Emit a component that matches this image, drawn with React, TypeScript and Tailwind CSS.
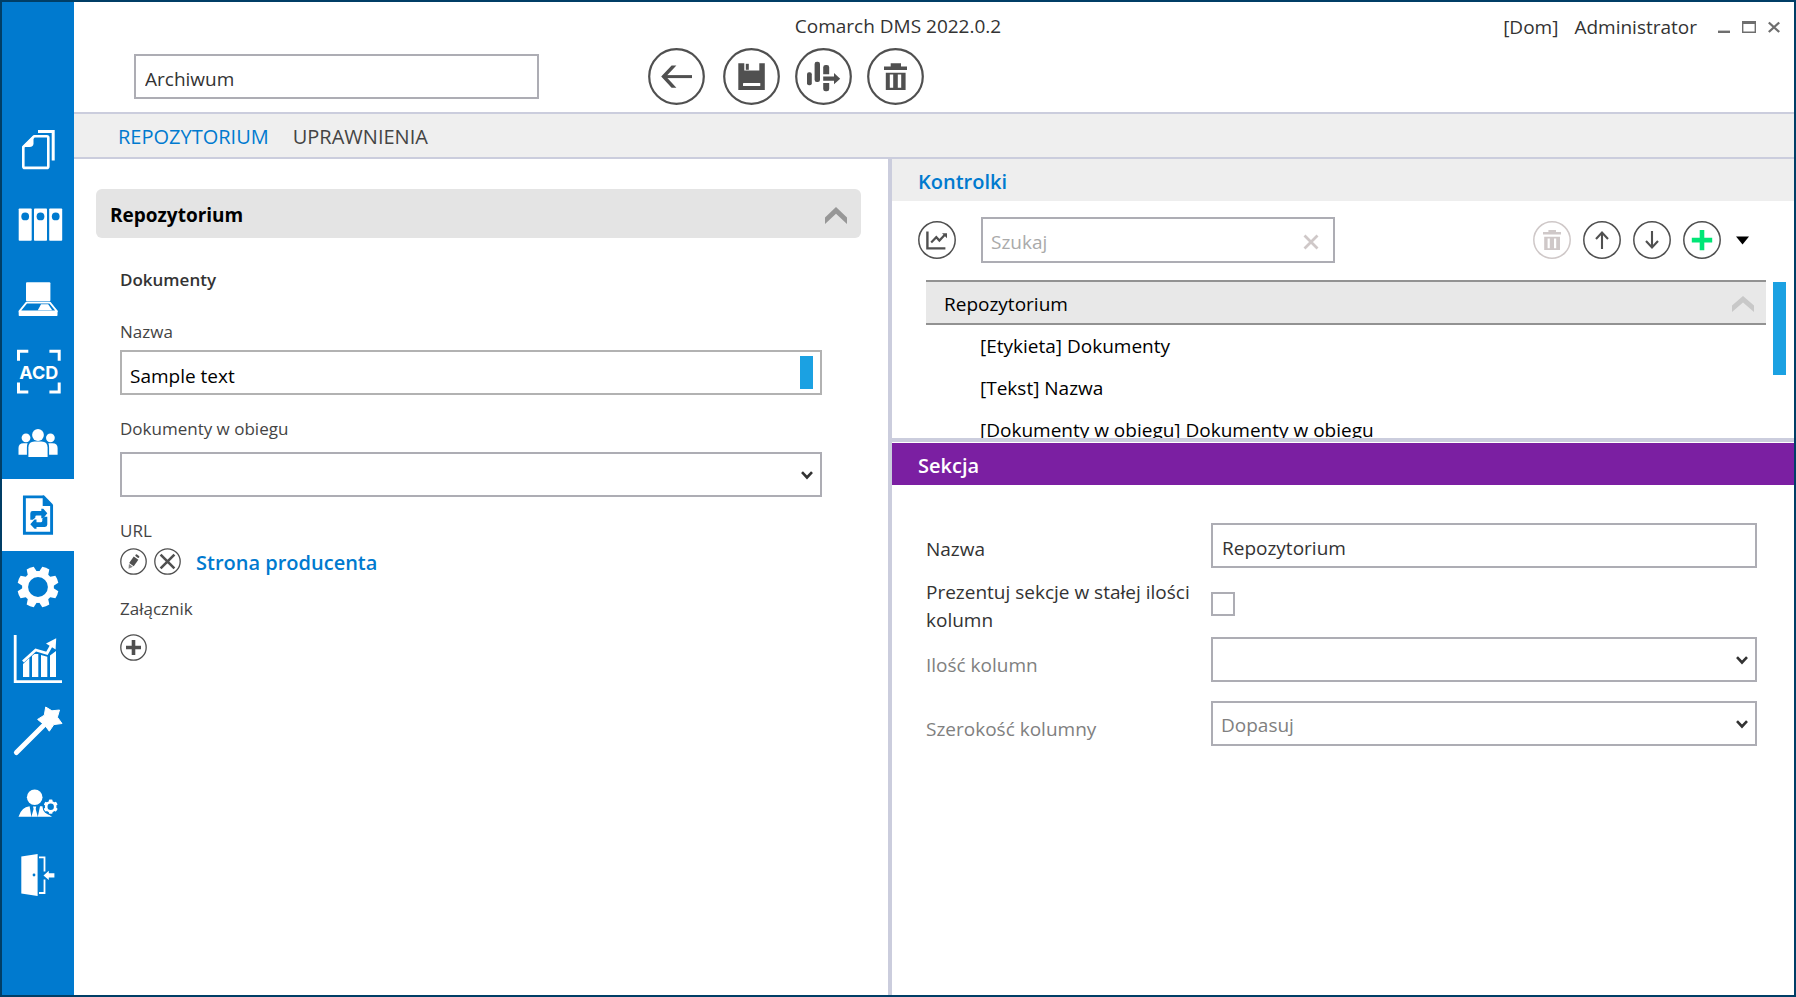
import { useState } from "react";
import type { ReactNode, SelectHTMLAttributes } from "react";

const BLUE = "#007acf";

function DocumentsIcon() {
  return (
    <>
      <path d="M32 17.3H44.8Q46.3 17.3 46.3 18.8V47.4Q46.3 48.9 44.8 48.9H22.8Q21.3 48.9 21.3 47.4V28Z" fill="none" stroke="#fff" strokeWidth="2.6" strokeLinejoin="round" />
      <path d="M20.5 28 31.5 16.5V24.2Q31.5 28 27.5 28Z" fill="#fff" />
      <path d="M36 12.6H51.2V41.5" fill="none" stroke="#fff" strokeWidth="3" />
    </>
  );
}

function BindersIcon() {
  return (
    <>
      {[16.7, 32, 47.2].map((x) => (
        <g key={x}>
          <rect x={x} y="17.5" width="13" height="32.2" rx="0.8" fill="#fff" />
          <circle cx={x + 6.5} cy="25.4" r="3.9" fill={BLUE} />
        </g>
      ))}
    </>
  );
}

function LaptopIcon() {
  return (
    <>
      <rect x="24" y="19.3" width="24.4" height="18.9" rx="1" fill="#fff" />
      <path d="M24.5 39.6H47.9L55 48.4H17.4Z" fill="none" stroke="#fff" strokeWidth="1.8" strokeLinejoin="round" />
      <path d="M39 41.2H46.2L50.2 47.2H35.8Z" fill="#fff" />
      <rect x="16.7" y="48.6" width="38.8" height="4.4" rx="0.8" fill="#fff" />
    </>
  );
}

function AcdIcon() {
  return (
    <>
      <path d="M16.5 25.8V16.2H26.3M47.4 16.2H57.2V25.8M57.2 47.5V57.1H47.4M26.3 57.1H16.5V47.5" fill="none" stroke="#fff" strokeWidth="3" />
      <text x="36.8" y="43.6" textAnchor="middle" fontFamily="Inter, sans-serif" fontWeight="700" fontSize="18" fill="#fff">ACD</text>
    </>
  );
}

function PeopleIcon() {
  return (
    <g fill="#fff">
      <circle cx="36" cy="28" r="5.9" />
      <circle cx="24" cy="30.8" r="4.4" />
      <circle cx="48.4" cy="30.8" r="4.4" />
      <path d="M26.4 50V40.5Q26.4 34.4 32.5 34.4H39.5Q45.6 34.4 45.6 40.5V50Z" />
      <path d="M16.5 47.7V41Q16.5 36.2 21.5 36.2H25.6Q24.9 38 24.9 40.5V47.7Z" />
      <path d="M55.6 47.7V41Q55.6 36.2 50.5 36.2H46.4Q47.1 38 47.1 40.5V47.7Z" />
    </g>
  );
}

function WorkflowDocIcon() {
  return (
    <>
      <path d="M42 17.9H22.4V54.2H49.6V26" fill="none" stroke={BLUE} strokeWidth="2.9" />
      <path d="M40.7 16.5H42.2L51 25.5V27H40.7Z" fill={BLUE} />
      <path d="M28.3 40.8V34.4Q28.3 32 30.7 32H39.3V29.7H41.3L45.3 34.3 41.3 39.2H39.3V36.6H34.6Q33.3 36.6 33.3 38V38.8L30.8 40.8Z" fill={BLUE} />
      <path d="M45.3 37.8V45.6Q45.3 48 42.9 48H34.5V49.8H32.5L28.3 45.2 32.5 40.6H34.5V43.2H39Q40.3 43.2 40.3 41.8V39.8L42.8 37.8Z" fill={BLUE} />
    </>
  );
}

function GearIcon() {
  return (
    <>
      <circle cx="36" cy="36" r="12.9" fill="none" stroke="#fff" strokeWidth="6" />
      {[22.5, 67.5, 112.5, 157.5, 202.5, 247.5, 292.5, 337.5].map((a) => (
        <path key={a} d="M31 22 32.2 15.6Q36 14.8 39.8 15.6L41 22Z" fill="#fff" transform={`rotate(${a} 36 36)`} />
      ))}
    </>
  );
}

function ChartIcon() {
  return (
    <>
      <path d="M13.2 12V58.6H60" fill="none" stroke="#fff" strokeWidth="2.8" />
      <path d="M21 41 27.3 35V54H21ZM30 33 32.5 31H36.3V54H30ZM39 32 45.3 33.8V54H39ZM48 32.5 54 28V54H48Z" fill="#fff" />
      <path d="M21 38.5 33.7 27 45 30.3 50.5 20.5" fill="none" stroke="#fff" strokeWidth="2.8" />
      <path d="M54.2 15.2 44 20.6 53.6 26.6Z" fill="#fff" />
    </>
  );
}

function WandIcon() {
  return (
    <>
      <path d="M14.4 57.6 43.5 28.6" stroke="#fff" strokeWidth="5" strokeLinecap="round" />
      <path d="M43.7 12 49.9 15.8 57.5 15 55.4 22.2 60 28.5 51.8 29.6 47.3 36.2 43 30.4 35.6 24.4 42.3 20.2Z" fill="#fff" stroke="#fff" strokeWidth="1" strokeLinejoin="round" />
    </>
  );
}

function UserGearIcon() {
  return (
    <>
      <circle cx="32.7" cy="30.3" r="7.8" fill="#fff" />
      <path d="M16.5 49.8Q19.5 39.8 27.6 39.2L29.4 49.8ZM35.8 49.8 38 39.2H41L44.5 46 50 49.8Z" fill="#fff" />
      <path d="M29.4 49.8 31.6 42 31 39.6H34.2L33.7 42 35.8 49.8Z" fill="#fff" />
      <circle cx="48.7" cy="39.7" r="8.2" fill={BLUE} />
      <circle cx="48.7" cy="39.7" r="4.5" fill="none" stroke="#fff" strokeWidth="2.6" />
      {[0, 60, 120, 180, 240, 300].map((a) => (
        <rect key={a} x="46.9" y="32.6" width="3.6" height="3" rx="0.8" fill="#fff" transform={`rotate(${a} 48.7 39.7)`} />
      ))}
    </>
  );
}

function ExitIcon() {
  return (
    <>
      <path d="M19.3 17.6 35.6 15V57L19.3 54.4Z" fill="#fff" />
      <circle cx="32" cy="36" r="1.4" fill={BLUE} />
      <path d="M37 18.4H42.5V32.5M42.5 40.5V54H37" fill="none" stroke="#fff" strokeWidth="1.8" />
      <path d="M41.5 36.4 46.8 31.8V34.2H52.4V38.6H46.8V41Z" fill="#fff" />
    </>
  );
}

const navItems: { label: string; icon: ReactNode; active?: boolean }[] = [
  { label: "Dokumenty", icon: <DocumentsIcon /> },
  { label: "Archiwum", icon: <BindersIcon /> },
  { label: "Stanowisko", icon: <LaptopIcon /> },
  { label: "ACD", icon: <AcdIcon /> },
  { label: "Pracownicy", icon: <PeopleIcon /> },
  { label: "Typy obiegów", icon: <WorkflowDocIcon />, active: true },
  { label: "Ustawienia", icon: <GearIcon /> },
  { label: "Raporty", icon: <ChartIcon /> },
  { label: "Kreator", icon: <WandIcon /> },
  { label: "Operator", icon: <UserGearIcon /> },
  { label: "Wyloguj", icon: <ExitIcon /> },
];

function Sidebar() {
  return (
    <nav className="w-[72px] shrink-0 bg-[#007acf] pt-[117px]">
      {navItems.map((item) => (
        <button
          key={item.label}
          type="button"
          aria-label={item.label}
          className={item.active ? "block size-[72px] bg-white" : "block size-[72px]"}
        >
          <svg viewBox="0 0 72 72" className="size-[72px]">{item.icon}</svg>
        </button>
      ))}
    </nav>
  );
}

function RoundButton({ label, children }: { label: string; children: ReactNode }) {
  return (
    <button type="button" aria-label={label} className="size-[57px] text-[#505050]">
      <svg viewBox="0 0 57 57" className="size-[57px]" fill="currentColor">
        <circle cx="28.5" cy="28.5" r="27.3" fill="none" stroke="currentColor" strokeWidth="2.2" />
        {children}
      </svg>
    </button>
  );
}

function SmallRoundButton({ label, muted, children }: { label: string; muted?: boolean; children: ReactNode }) {
  return (
    <button
      type="button"
      aria-label={label}
      disabled={muted}
      className={muted ? "size-[38px] text-[#cfc8c8]" : "size-[38px] text-[#505050]"}
    >
      <svg viewBox="0 0 38 38" className="size-[38px]" fill="currentColor">
        <circle cx="19" cy="19" r="18.2" fill="none" stroke="currentColor" strokeWidth="1.5" />
        {children}
      </svg>
    </button>
  );
}

function TinyRoundButton({ label, children }: { label: string; children: ReactNode }) {
  return (
    <button type="button" aria-label={label} className="block size-[27px] text-[#505050]">
      <svg viewBox="0 0 27 27" className="size-[27px]" fill="currentColor">
        <circle cx="13.5" cy="13.5" r="12.7" fill="none" stroke="currentColor" strokeWidth="1.3" />
        {children}
      </svg>
    </button>
  );
}

function Select({ children, ...rest }: SelectHTMLAttributes<HTMLSelectElement>) {
  return (
    <div className="relative w-full">
      <select
        {...rest}
        className="block h-[45px] w-full appearance-none border-2 border-[#adadb4] bg-white pt-[3px] pr-8 pl-2 text-[19px] text-[#333333] disabled:text-[#808080] disabled:opacity-100"
      >
        {children}
      </select>
      <svg viewBox="0 0 12 10" className="pointer-events-none absolute top-[19px] right-[9px] h-[10px] w-[12px]">
        <path d="M1 1.2 6 6.5 11 1.2" fill="none" stroke="#333" strokeWidth="2.6" />
      </svg>
    </div>
  );
}

function Header() {
  const [name, setName] = useState("Archiwum");
  return (
    <header className="h-[112px] border-b-2 border-[#cbcddd] bg-white">
      <div className="grid h-[46px] grid-cols-[1fr_auto_1fr] items-center pt-0.5 text-[19px] leading-6 text-[#333333]">
        <span />
        <h1 className="mr-[72px]">Comarch DMS 2022.0.2</h1>
        <div className="flex items-center justify-end pt-0.5 pr-[14px]">
          <span className="mr-4">[Dom]</span>
          <span className="mr-[21px]">Administrator</span>
          <div className="flex gap-[12px] text-[#6e6e6e]">
            <button type="button" aria-label="Minimalizuj">
              <svg viewBox="0 0 12 12" className="h-3 w-3"><path d="M0 10.8H12" stroke="currentColor" strokeWidth="2.4" /></svg>
            </button>
            <button type="button" aria-label="Maksymalizuj">
              <svg viewBox="0 0 14 12" className="h-3 w-[14px]"><path fillRule="evenodd" d="M0 0H14V12H0ZM1.4 3V10.6H12.6V3Z" fill="currentColor" /></svg>
            </button>
            <button type="button" aria-label="Zamknij">
              <svg viewBox="0 0 12 12" className="h-3 w-3"><path d="M.8 1.5 11.2 11M11.2 1.5 .8 11" stroke="currentColor" strokeWidth="2.3" /></svg>
            </button>
          </div>
        </div>
      </div>
      <div className="flex items-center pl-[60px]">
        <input
          aria-label="Nazwa typu"
          value={name}
          onChange={(e) => setName(e.target.value)}
          className="h-[45px] w-[405px] border-2 border-[#adadb4] bg-white px-[9px] pt-[5px] text-[19px] text-[#333333]"
        />
        <div className="ml-[109px] flex">
          <div className="mr-[18px] h-[57px]">
            <RoundButton label="Wstecz">
              <path d="M15 28.6H44" stroke="currentColor" strokeWidth="3" />
              <path d="M28.4 17.6H23.6L13.2 28.6 23.6 39.8H28.4L18 28.6Z" />
            </RoundButton>
          </div>
          <div className="flex gap-[15px]">
            <RoundButton label="Zapisz">
              <path d="M15.3 15.3H21.3V22.4H36.3V15.3H41.8V42H15.3Z" />
              <rect x="22.8" y="15.8" width="3" height="6" />
              <rect x="20" y="35" width="17.3" height="3" rx="0.6" fill="#fff" />
            </RoundButton>
            <RoundButton label="Przekaż">
              <rect x="12" y="24.2" width="4.8" height="13" rx="2" />
              <rect x="19.6" y="13.8" width="5.4" height="20.2" rx="2.2" />
              <path d="M28.2 26.2V19.4Q28.2 17 30.6 17H31.8Q34.2 17 34.2 19.4V26.2Z" />
              <path d="M28.2 34.9H34.2V40.9Q34.2 43.2 31.8 43.2H30.6Q28.2 43.2 28.2 40.9Z" />
              <path d="M28.2 28.6H39V25L45.2 30.7 39 36.2V32.7H28.2Z" />
            </RoundButton>
            <RoundButton label="Usuń">
              <path d="M23.7 15.3H34V18.6H40V21.9H17V18.6H23.7Z" />
              <path fillRule="evenodd" d="M18.8 24.8H38.6V42H18.8ZM22.8 26.6V39.8H26.2V26.6ZM30.8 26.6V39.8H34.2V26.6Z" />
            </RoundButton>
          </div>
        </div>
      </div>
    </header>
  );
}

function Tabs() {
  return (
    <div className="flex h-[45px] items-center gap-6 border-b-2 border-[#cbcddd] bg-[#efefef] pt-0.5 pl-[44px] text-[20px] leading-6">
      <button type="button" className="text-[#007acf]">REPOZYTORIUM</button>
      <button type="button" className="text-[#444444]">UPRAWNIENIA</button>
    </div>
  );
}

function PreviewPanel() {
  const [text, setText] = useState("Sample text");
  return (
    <section className="border-r-4 border-[#cbcddd] bg-white pt-[30px] pr-[27px] pl-[22px]">
      <button
        type="button"
        aria-expanded="true"
        className="flex h-[49px] w-full items-center justify-between rounded-md bg-[#e4e4e4] pt-[3px] pr-[13px] pl-[14px] text-[19px] font-bold text-black"
      >
        Repozytorium
        <svg viewBox="0 0 24 17" className="h-[17px] w-6"><path d="M1 10.5 12 0 23 10.5V17L12 6.8 1 17Z" fill="#979797" /></svg>
      </button>
      <div className="pr-[39px] pl-6 text-[17px] leading-6 text-[#444444]">
        <h2 className="mt-[30px] font-semibold text-[#333333]">Dokumenty</h2>
        <label htmlFor="preview-name" className="mt-7 mb-[6px] block">Nazwa</label>
        <div className="flex h-[45px] border-2 border-[#b2b2b2] bg-white pr-[7px]">
          <input
            id="preview-name"
            value={text}
            onChange={(e) => setText(e.target.value)}
            className="min-w-0 flex-1 bg-transparent px-2 pt-[6px] text-[19px] text-black"
          />
          <div className="mt-1 h-[33px] w-[13px] bg-[#1ba1e2]" />
        </div>
        <label htmlFor="preview-docs" className="mt-[22px] mb-[11px] block">Dokumenty w obiegu</label>
        <Select id="preview-docs" defaultValue=""><option value="" /></Select>
        <p className="mt-[22px] mb-[5px]">URL</p>
        <div className="flex items-center">
          <TinyRoundButton label="Edytuj">
            <g transform="rotate(35 13.5 13.5)">
              <rect x="10.8" y="9.2" width="5.6" height="8" />
              <rect x="11.4" y="5.8" width="4.4" height="2.2" rx="1" />
              <path d="M11.2 18.2H16L13.6 22.2Z" opacity="0.7" />
            </g>
          </TinyRoundButton>
          <span className="w-[7px]" />
          <TinyRoundButton label="Usuń adres">
            <path d="M6.6 6.6 20.4 20.4M20.4 6.6 6.6 20.4" stroke="currentColor" strokeWidth="2.6" />
          </TinyRoundButton>
          <a href="#producent" className="ml-[15px] pt-0.5 text-[20px] leading-6 font-semibold text-[#007acf]">Strona producenta</a>
        </div>
        <p className="mt-[22px] mb-[13px]">Załącznik</p>
        <TinyRoundButton label="Dodaj załącznik">
          <path d="M13.5 6V21M6 13.5H21" stroke="currentColor" strokeWidth="3.6" />
        </TinyRoundButton>
      </div>
    </section>
  );
}

function ControlsPanel() {
  const [query, setQuery] = useState("");
  return (
    <section>
      <h2 className="flex h-[42px] items-center bg-[#eeeeee] pt-[3px] pl-[26px] text-[20px] font-semibold text-[#007acf]">Kontrolki</h2>
      <div className="flex items-center pt-4 pr-[45px] pb-[17px] pl-[26px]">
        <SmallRoundButton label="Wykres">
          <path d="M9.4 10.4V27.4H27.4" fill="none" stroke="currentColor" strokeWidth="2.4" />
          <path d="M13.2 21.4 18.3 16.2 21.4 19.6 26.6 14" fill="none" stroke="currentColor" strokeWidth="2.2" />
          <path d="M24 12.2H29V17.2Z" />
        </SmallRoundButton>
        <div className="ml-[25px] flex h-[46px] w-[354px] items-center border-2 border-[#adadb4] bg-white pr-[14px]">
          <input
            aria-label="Szukaj"
            placeholder="Szukaj"
            value={query}
            onChange={(e) => setQuery(e.target.value)}
            className="min-w-0 flex-1 px-2 pt-[5px] text-[19px] text-[#333333] placeholder:text-[#aaaaaa]"
          />
          <button type="button" aria-label="Wyczyść" onClick={() => setQuery("")} className="pt-[3px]">
            <svg viewBox="0 0 16 16" className="size-4"><path d="M1.5 1.5 14.5 14.5M14.5 1.5 1.5 14.5" stroke="#cfc8c8" strokeWidth="2.8" /></svg>
          </button>
        </div>
        <div className="ml-auto flex items-center gap-3">
          <SmallRoundButton label="Usuń kontrolkę" muted>
            <path d="M15.4 9H23V11H28V13.6H10V11H15.4Z" />
            <path fillRule="evenodd" d="M11.2 15.8H27V29H11.2ZM14.6 17.4V27.2H16.8V17.4ZM21 17.4V27.2H23.2V17.4Z" />
          </SmallRoundButton>
          <SmallRoundButton label="W górę">
            <path d="M19 28V11.5M13 18 19 11.6 25 18" fill="none" stroke="currentColor" strokeWidth="2.1" />
          </SmallRoundButton>
          <SmallRoundButton label="W dół">
            <path d="M19 10V26.5M13 20 19 26.4 25 20" fill="none" stroke="currentColor" strokeWidth="2.1" />
          </SmallRoundButton>
          <SmallRoundButton label="Dodaj kontrolkę">
            <path d="M19 9V29.2M8.8 19.1H29.2" stroke="#00e676" strokeWidth="4.6" />
          </SmallRoundButton>
          <button type="button" aria-label="Więcej" className="ml-[3px]">
            <svg viewBox="0 0 13 9" className="h-[9px] w-[13px]"><path d="M0 0.5H13L6.5 8.5Z" fill="#000" /></svg>
          </button>
        </div>
      </div>
      <div className="flex h-[158px] overflow-hidden pr-[8px] pl-[34px] text-[19px] leading-6 text-black">
        <div className="mr-[7px] flex-1">
          <button type="button" aria-expanded="true" className="flex h-[45px] w-full items-center justify-between border-y-2 border-[#929292] bg-[#e8e8e8] pt-0.5 pr-3 pl-[18px]">
            Repozytorium
            <svg viewBox="0 0 22 17" className="h-[17px] w-[22px]"><path d="M0 10.5 11 1 22 10.5V17L11 7.6 0 17Z" fill="#c8c8c8" /></svg>
          </button>
          <ul className="pl-[54px] leading-[42px]">
            <li>[Etykieta] Dokumenty</li>
            <li>[Tekst] Nazwa</li>
            <li>[Dokumenty w obiegu] Dokumenty w obiegu</li>
          </ul>
        </div>
        <div className="mt-0.5 h-[93px] w-[13px] bg-[#1ba1e2]" />
      </div>
    </section>
  );
}

function SectionPanel() {
  const [name, setName] = useState("Repozytorium");
  return (
    <section className="border-t-4 border-[#cbcddd] pt-px">
      <h2 className="flex h-[42px] items-center bg-[#7b1fa2] pt-[3px] pl-[26px] text-[20px] font-semibold text-white">Sekcja</h2>
      <form className="grid grid-cols-[285px_1fr] pt-[38px] pr-[37px] pl-[34px] text-[19px] leading-7 text-[#333333]">
        <label htmlFor="section-name" className="pt-3">Nazwa</label>
        <input
          id="section-name"
          value={name}
          onChange={(e) => setName(e.target.value)}
          className="h-[45px] w-full border-2 border-[#adadb4] bg-white px-[9px] pt-[5px]"
        />
        <label htmlFor="section-fixed" className="pt-[10px] pr-4">Prezentuj sekcje w stałej ilości kolumn</label>
        <div className="h-[69px] pt-6">
          <input id="section-fixed" type="checkbox" className="block size-6 appearance-none border-2 border-[#adadb4] bg-white checked:bg-[#007acf]" />
        </div>
        <label htmlFor="section-count" className="pt-[14px] text-[#808080]">Ilość kolumn</label>
        <Select id="section-count" disabled defaultValue=""><option value="" /></Select>
        <label htmlFor="section-width" className="mt-[19px] pt-[14px] text-[#808080]">Szerokość kolumny</label>
        <div className="mt-[19px]">
          <Select id="section-width" disabled defaultValue="Dopasuj"><option>Dopasuj</option></Select>
        </div>
      </form>
    </section>
  );
}

export default function App() {
  return (
    <div className="flex min-h-screen border-2 border-[#003e66] bg-white font-['Open_Sans','Noto_Sans',sans-serif]">
      <Sidebar />
      <div className="flex min-w-0 flex-1 flex-col">
        <Header />
        <Tabs />
        <main className="grid flex-1 grid-cols-[818fr_902fr]">
          <PreviewPanel />
          <div className="min-w-0">
            <ControlsPanel />
            <SectionPanel />
          </div>
        </main>
      </div>
    </div>
  );
}
